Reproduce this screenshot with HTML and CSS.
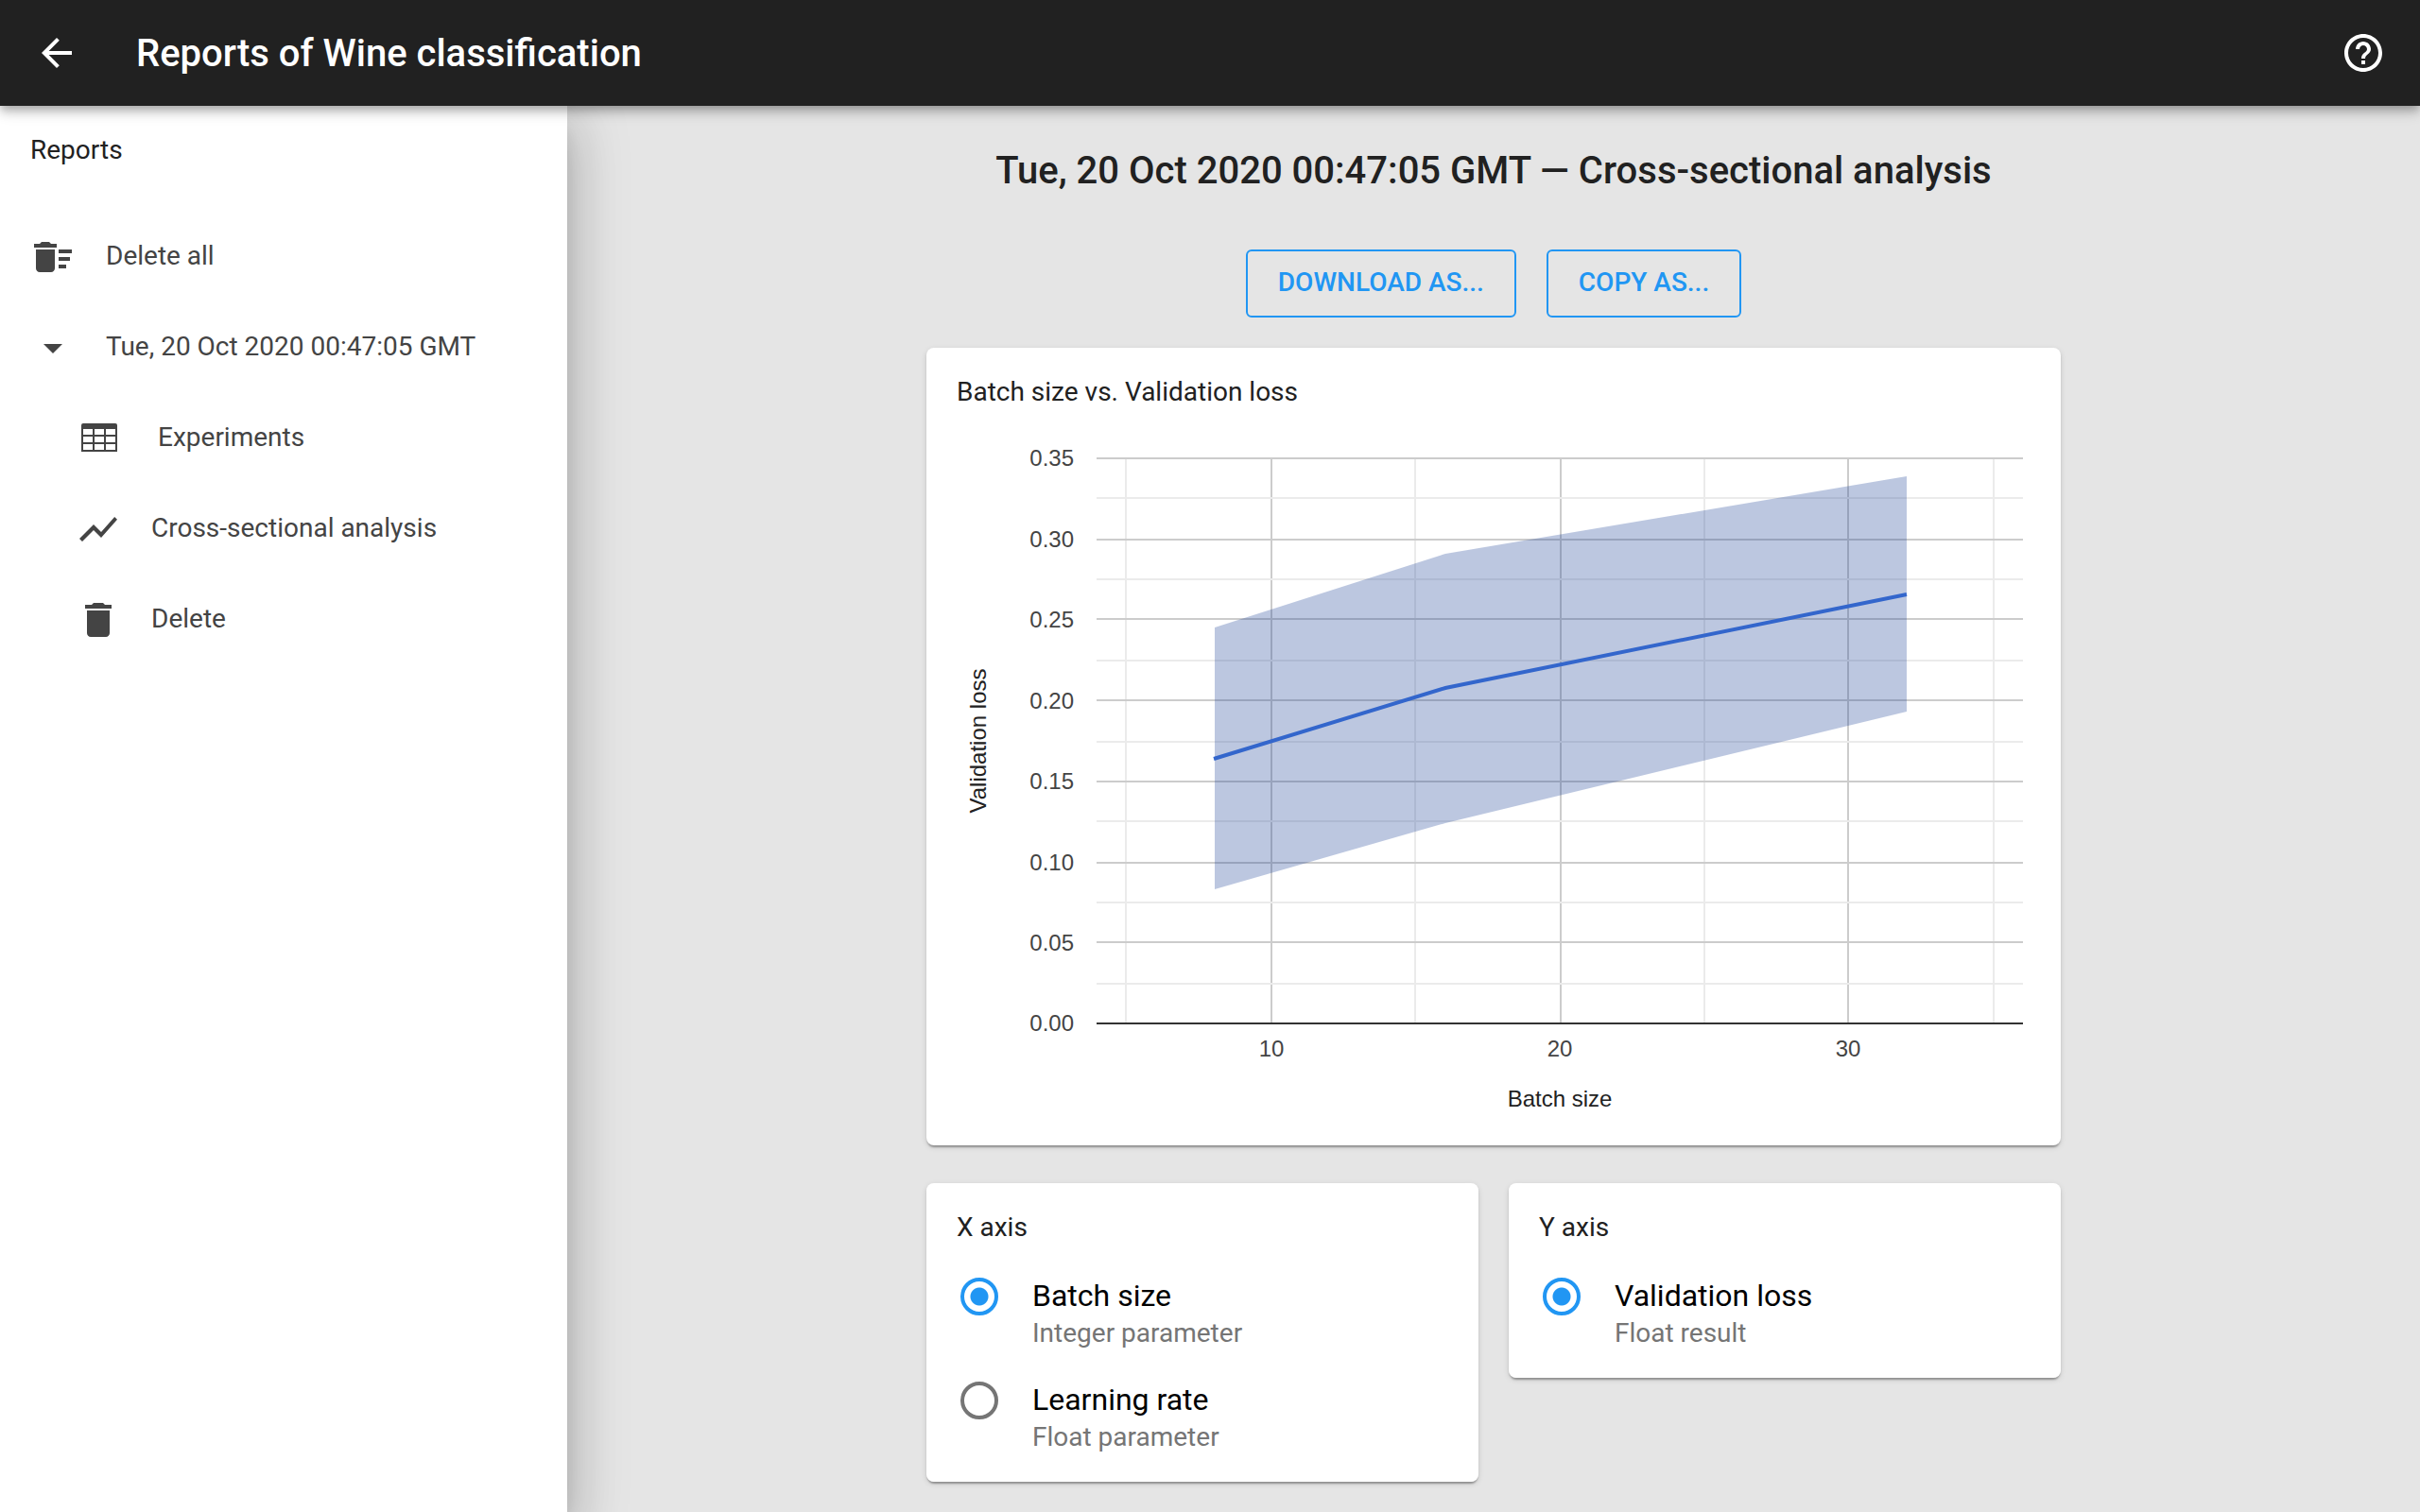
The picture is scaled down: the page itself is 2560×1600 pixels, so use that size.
FILE: index.html
```html
<!DOCTYPE html>
<html lang="en">
<head>
<meta charset="utf-8">
<meta name="viewport" content="width=device-width, initial-scale=1">
<title>Reports of Wine classification</title>
<link rel="stylesheet" href="styles.css">
</head>
<body>
<header class="app-bar">
  <a class="icon-button" href="#" aria-label="Back">
    <svg class="icon" viewBox="0 0 24 24" aria-hidden="true"><path d="M20 11H7.83l5.59-5.59L12 4l-8 8 8 8 1.41-1.41L7.83 13H20v-2z"/></svg>
  </a>
  <h1 class="app-title">Reports of Wine classification</h1>
  <button class="icon-button" type="button" aria-label="Help">
    <svg class="icon" viewBox="0 0 24 24" aria-hidden="true"><path d="M11 18h2v-2h-2v2zm1-16C6.48 2 2 6.48 2 12s4.480 10 10 10 10-4.480 10-10S17.520 2 12 2zm0 18c-4.410 0-8-3.590-8-8s3.590-8 8-8 8 3.590 8 8-3.590 8-8 8zm0-14c-2.210 0-4 1.790-4 4h2c0-1.100.9-2 2-2s2 .9 2 2c0 2-3 1.750-3 5h2c0-2.250 3-2.500 3-5 0-2.210-1.790-4-4-4z"/></svg>
  </button>
</header>
<div class="layout">
  <nav class="drawer" aria-label="Reports">
    <h2 class="section-title">Reports</h2>
    <ul class="nav-list">
      <li><a class="nav-item" href="#">
        <svg class="icon" viewBox="0 0 24 24" aria-hidden="true"><path d="M15 16h4v2h-4zm0-8h7v2h-7zm0 4h6v2h-6zM3 18c0 1.1.9 2 2 2h6c1.1 0 2-.9 2-2V8H3v10zM14 5h-3l-1-1H6L5 5H2v2h12z"/></svg>
        <span>Delete all</span></a></li>
      <li><a class="nav-item" href="#">
        <svg class="icon" viewBox="0 0 24 24" aria-hidden="true"><path d="M7 10l5 5 5-5z"/></svg>
        <span>Tue, 20 Oct 2020 00:47:05 GMT</span></a>
        <ul class="nav-list nested">
          <li><a class="nav-item" href="#">
            <svg class="icon icon-wide" viewBox="0 0 55 48" aria-hidden="true"><path fill-rule="evenodd" d="M8 8h34a2 2 0 0 1 2 2v28H6V10a2 2 0 0 1 2-2zM8 14v6h10v-6zM20 14v6h10v-6zM32 14v6h10v-6zM8 22v6h10v-6zM20 22v6h10v-6zM32 22v6h10v-6zM8 30v6h10v-6zM20 30v6h10v-6zM32 30v6h10v-6z"/></svg>
            <span>Experiments</span></a></li>
          <li><a class="nav-item" href="#" aria-current="page">
            <svg class="icon" viewBox="0 0 24 24" aria-hidden="true"><path d="M3.500 18.490l6-6.010 4 4L22 6.920l-1.410-1.410-7.090 7.970-4-4L2 16.990z"/></svg>
            <span>Cross-sectional analysis</span></a></li>
          <li><a class="nav-item" href="#">
            <svg class="icon" viewBox="0 0 24 24" aria-hidden="true"><path d="M6 19c0 1.100.9 2 2 2h8c1.100 0 2-.9 2-2V7H6v12zM19 4h-3.500l-1-1h-5l-1 1H5v2h14V4z"/></svg>
            <span>Delete</span></a></li>
        </ul>
      </li>
    </ul>
  </nav>
  <main class="content">
    <div class="report">
      <h2 class="report-title">Tue, 20 Oct 2020 00:47:05 GMT — Cross-sectional analysis</h2>
      <div class="actions">
        <button class="button" type="button">DOWNLOAD AS...</button>
        <button class="button" type="button">COPY AS...</button>
      </div>
      <section class="card chart-card">
        <h3 class="section-title">Batch size vs. Validation loss</h3>
        <svg class="chart" viewBox="0 0 1136 728" role="img" aria-label="Validation loss by batch size">
          <g class="grid-minor">
            <path d="M179 34v596M485 34v596M791 34v596M1097 34v596"/>
          </g>
          <g class="grid-major">
            <path d="M333 34v596M639 34v596M943 34v596"/>
            <path d="M148 33h980M148 119h980M148 203h980M148 289h980M148 375h980M148 461h980M148 545h980"/>
          </g>
          <g class="grid-minor">
            <path d="M148 75h980M148 161h980M148 247h980M148 333h980M148 417h980M148 503h980M148 589h980"/>
          </g>
          <path class="axis-line" d="M148 631h980"/>
          <path class="band" d="M273 212L517 134L1005 52V301L517 419L273 489z"/>
          <path class="series" d="M272 351L517 276L1005 177"/>
          <g class="tick tick-y">
            <text x="124" y="41">0.35</text>
            <text x="124" y="127">0.30</text>
            <text x="124" y="212">0.25</text>
            <text x="124" y="298">0.20</text>
            <text x="124" y="383">0.15</text>
            <text x="124" y="469">0.10</text>
            <text x="124" y="554">0.05</text>
            <text x="124" y="639">0.00</text>
          </g>
          <g class="tick tick-x">
            <text x="333" y="666">10</text>
            <text x="638" y="666">20</text>
            <text x="943" y="666">30</text>
          </g>
          <text class="axis-title" x="638" y="719">Batch size</text>
          <text class="axis-title" transform="translate(31 332) rotate(-90)">Validation loss</text>
        </svg>
      </section>
      <div class="axes">
        <fieldset class="card axis-card">
          <legend class="section-title">X axis</legend>
          <label class="option"><input class="radio" type="radio" name="x-axis" checked>
            <span class="option-text"><span class="option-name">Batch size</span><span class="option-kind">Integer parameter</span></span></label>
          <label class="option"><input class="radio" type="radio" name="x-axis">
            <span class="option-text"><span class="option-name">Learning rate</span><span class="option-kind">Float parameter</span></span></label>
        </fieldset>
        <fieldset class="card axis-card">
          <legend class="section-title">Y axis</legend>
          <label class="option"><input class="radio" type="radio" name="y-axis" checked>
            <span class="option-text"><span class="option-name">Validation loss</span><span class="option-kind">Float result</span></span></label>
        </fieldset>
      </div>
    </div>
  </main>
</div>
</body>
</html>
```
FILE: styles.css
```css
* { box-sizing: border-box; }

body {
  margin: 0;
  min-height: 100vh;
  display: flex;
  flex-direction: column;
  background: #e5e5e5;
  color: #212121;
  font-family: Roboto, "Liberation Sans", sans-serif;
  font-size: 28px;
  line-height: 40px;
}

h1, h2, h3, ul { margin: 0; padding: 0; font-weight: 400; }
ul { list-style: none; }

.icon { width: 48px; height: 48px; flex: none; fill: currentColor; }
.icon-wide { width: 55px; }

.app-bar {
  display: flex;
  align-items: center;
  height: 112px;
  padding: 0 36px;
  background: #212121;
  color: #fff;
  position: relative;
  z-index: 2;
  box-shadow: 0 4px 8px -2px rgba(0, 0, 0, .2), 0 8px 10px rgba(0, 0, 0, .14), 0 2px 20px rgba(0, 0, 0, .12);
}
.icon-button {
  display: flex;
  padding: 0;
  border: 0;
  background: none;
  color: inherit;
  cursor: pointer;
}
.app-title {
  flex: 1;
  margin-left: 60px;
  padding-top: 2px;
  font-size: 40px;
  font-weight: 500;
  line-height: 64px;
}

.layout { flex: 1; display: flex; }

.drawer {
  flex: none;
  width: 600px;
  padding-top: 24px;
  background: #fff;
  position: relative;
  z-index: 1;
  box-shadow: 0 16px 20px -10px rgba(0, 0, 0, .2), 0 32px 48px 4px rgba(0, 0, 0, .14), 0 12px 60px 10px rgba(0, 0, 0, .12);
}
.drawer > .section-title { padding: 0 32px; }
.drawer > .nav-list { margin-top: 42px; }

.section-title { font-size: 28px; line-height: 46px; }

.nav-item {
  display: flex;
  align-items: center;
  gap: 32px;
  height: 96px;
  padding: 0 32px;
  color: #444;
  text-decoration: none;
}
.nav-item span { padding-bottom: 2px; }
.nested .nav-item { padding-left: 80px; }

.content { flex: 1; padding: 32px; }
.report { max-width: 1200px; margin: 0 auto; }
.report-title {
  font-size: 40px;
  font-weight: 500;
  line-height: 74px;
  text-align: center;
}
.actions {
  display: flex;
  justify-content: center;
  gap: 32px;
  margin: 46px 0 32px;
}
.button {
  height: 72px;
  padding: 0 32px 2px;
  border: 2px solid #2196f3;
  border-radius: 6px;
  background: none;
  color: #2196f3;
  font: 500 28px/64px Roboto, "Liberation Sans", sans-serif;
  cursor: pointer;
}

.card {
  min-width: 0;
  margin: 0;
  border: 0;
  border-radius: 8px;
  background: #fff;
  box-shadow: 0 4px 2px -2px rgba(0, 0, 0, .2), 0 2px 2px rgba(0, 0, 0, .14), 0 2px 6px rgba(0, 0, 0, .12);
}
.chart-card { padding: 24px 32px 32px; }
.chart { display: block; width: 100%; margin-top: 14px; }
.grid-minor { stroke: #ebebeb; stroke-width: 2; }
.grid-major { stroke: #ccc; stroke-width: 2; }
.axis-line { stroke: #333; stroke-width: 2; }
.band { fill: rgba(32, 70, 152, .3); }
.series { fill: none; stroke: #36c; stroke-width: 4; }
.tick, .axis-title { font-family: "Liberation Sans", Arial, sans-serif; font-size: 24px; }
.tick { fill: #444; }
.tick-y { text-anchor: end; }
.tick-x, .axis-title { text-anchor: middle; }
.axis-title { fill: #222; }

.axes {
  display: grid;
  grid-template-columns: 1fr 1fr;
  align-items: start;
  gap: 32px;
  margin-top: 40px;
}
.axis-card { padding: 24px 32px 12px; }
.axis-card legend { float: left; width: 100%; margin-bottom: 14px; padding: 0; }
.option {
  clear: both;
  display: flex;
  align-items: flex-start;
  gap: 36px;
  height: 110px;
  padding: 16px 4px 0;
  cursor: pointer;
}
.radio {
  appearance: none;
  flex: none;
  width: 40px;
  height: 40px;
  margin: 0;
  border: 4px solid #757575;
  border-radius: 50%;
}
.radio:checked {
  border-color: #2196f3;
  background: radial-gradient(circle, #2196f3 9px, transparent 10px);
}
.option-text { display: flex; flex-direction: column; color: #000; }
.option-name { font-size: 32px; line-height: 38px; }
.option-kind { color: #757575; line-height: 42px; }
```
